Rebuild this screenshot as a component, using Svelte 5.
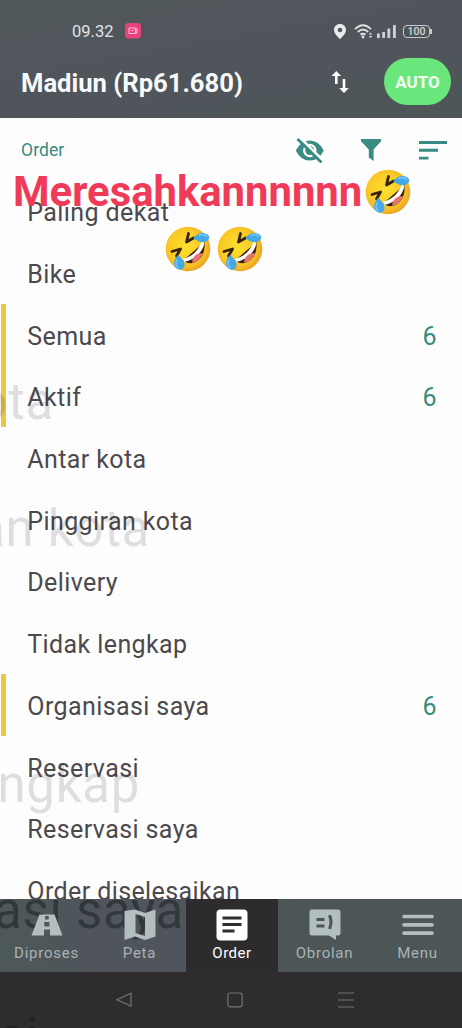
<script>
  const rows = [
    { label: 'Paling dekat' },
    { label: 'Bike' },
    { label: 'Semua', count: 6, marked: true },
    { label: 'Aktif', count: 6, marked: true },
    { label: 'Antar kota' },
    { label: 'Pinggiran kota' },
    { label: 'Delivery' },
    { label: 'Tidak lengkap' },
    { label: 'Organisasi saya', count: 6, marked: true },
    { label: 'Reservasi' },
    { label: 'Reservasi saya' },
    { label: 'Order diselesaikan' }
  ];
  const tabs = ['Diproses', 'Peta', 'Order', 'Obrolan', 'Menu'];
</script>

{#snippet laugh()}
  <svg class="emoji" viewBox="0 0 46 46">
    <defs>
      <radialGradient id="face" cx="45%" cy="45%" r="57%">
        <stop offset="0" stop-color="#fde030" />
        <stop offset=".7" stop-color="#fac825" />
        <stop offset="1" stop-color="#e9a326" />
      </radialGradient>
    </defs>
    <circle cx="23" cy="23" r="22.3" fill="url(#face)" />
    <path d="M39.500 16C40 22 39 29 34 33.500C29 38 23 38.500 18 34.500Z" fill="#38220f" />
    <path d="M36.500 15.500C34 24 27 31 17.500 33L19.500 36C29 34 37.500 27 39.500 17Z" fill="#fff" />
    <path d="M38 27.500C33 26 27.500 30 27 36.700C30 36.500 32 35.300 34 33.500C36 31.700 37.300 29.500 38 27.500Z" fill="#e5736e" />
    <path d="M7 25.500L15.500 23L11.500 30M23.500 7.500L21.500 16L28.500 12" fill="none" stroke="#38220f" stroke-width="2.800" stroke-linecap="round" stroke-linejoin="round" />
    <path d="M28.500 12.500C31 7 38 5.500 42.500 8.500C46.500 11.500 43 16 37.500 16C33 16 31 14 28.500 12.500Z" fill="#45a9e8" />
    <path d="M13 29C18 33 21.500 38 18.500 42C15.500 45.500 9.500 43 9 38C9 34 11 31 13 29Z" fill="#45a9e8" />
    <path d="M34 9.500C37 8 40 8.500 41.500 10.500M12 34C10.500 37 11 40 13 41.500" fill="none" stroke="#79c9f3" stroke-width="1.500" stroke-linecap="round" />
  </svg>
{/snippet}

<div class="screen">
  <header>
    <div class="status">
      <span class="time">09.32</span>
      <svg class="rec" viewBox="0 0 16 16"><rect width="16" height="15.500" rx="3.500" fill="#e7427b" /><path d="M4 5h6.500v5.500H4zM10.500 6L12 5.500v4.500l-1.500-.5M6 7.500h2.500" fill="none" stroke="#fac5dc" stroke-width="1" /></svg>
      <span class="gap"></span>
      <svg class="pin" viewBox="0 0 12 15"><path fill-rule="evenodd" d="M6 0C2.600 0 0 2.600 0 5.900C0 10 6 15 6 15s6-5 6-9.100C12 2.600 9.400 0 6 0Zm0 3.700a2.300 2.300 0 1 1 0 4.600a2.300 2.300 0 0 1 0-4.600Z" fill="#e7ebed" /></svg>
      <svg class="wifi" viewBox="0 0 19 15"><path d="M1 5.200Q9 -2.800 17 5.200M3.800 8Q9 3.200 14.200 8M6.500 10.800Q9 8.600 11.500 10.800" fill="none" stroke="#dde2e4" stroke-width="1.900" /><circle cx="9" cy="13" r="1.400" fill="#dde2e4" /><path d="M14.800 10.500l1.700-2 1.700 2zM14.800 12l1.700 2 1.700-2z" fill="#dde2e4" /></svg>
      <svg class="signal" viewBox="0 0 19 13"><path d="M0 8.500h2.800v4.500H0zM5.200 7H8v6H5.200zM10.400 3.500h2.800V13h-2.800zM16 0h2.800v13H16z" fill="#ccd1d4" /></svg>
      <span class="battery">100</span>
    </div>
    <div class="title">
      <h1>Madiun (Rp61.680)</h1>
      <svg class="swap" viewBox="0 0 18 24"><path d="M5.300 14V4M13 9v10" fill="none" stroke="#fff" stroke-width="2.600" /><path d="M.5 6L5.300 1l4.800 5zM8.200 18L13 23l4.800-5z" fill="#fff" /></svg>
      <button>AUTO</button>
    </div>
  </header>

  <main>
    <div class="tools">
      <span>Order</span>
      <svg class="eye" viewBox="0 0 30 25"><path d="M.8 12.500Q6 2.500 14.800 2.500T28.800 12.500Q24 22.500 14.800 22.500T.8 12.500Z" fill="#398b83" /><circle cx="14.800" cy="12.500" r="5.600" fill="#398b83" stroke="#fff" stroke-width="2.200" /><path d="M5 -.5L28.500 23" stroke="#fff" stroke-width="2.600" /><path d="M2.500 1L26.500 24.500" stroke="#398b83" stroke-width="2.800" /></svg>
      <svg class="funnel" viewBox="0 0 20 22"><path d="M0 0h20v2.200l-7.400 8.300V22L7.800 18.500v-8L0 2.200Z" fill="#398b83" /></svg>
      <svg class="sort" viewBox="0 0 28 19"><path d="M0 1.500h28M0 9.300h19M0 17.100h9.500" stroke="#398b83" stroke-width="2.900" /></svg>
    </div>
    <ul>
      {#each rows as row}
        <li class:marked={row.marked}>
          <span>{row.label}</span>
          {#if row.count}<b>{row.count}</b>{/if}
        </li>
      {/each}
    </ul>
  </main>

  <nav>
    {#each tabs as tab, i}
      <div class="tab" class:active={i === 2}>
        <svg viewBox="0 0 32 32">
          {#if i === 0}
            <path fill-rule="evenodd" d="M8.500 5.500h15L31.500 26.500H19v-6h-6v6H.5ZM14.300 7h3.400v3.500h-3.400zM13.500 13h5v4.500h-5z" />
          {:else if i === 1}
            <path fill-rule="evenodd" d="M.5 2L11 .5l10 3.500L31.500 .5V27.500L21 31 11 27.500.5 31ZM11.500 5v19l9.500 3V8Z" />
          {:else if i === 2}
            <rect x=".5" y=".5" width="31" height="31" rx="4" /><path d="M6.500 9h19M6.500 15.500h19M6.500 22h12" stroke="#2e2d30" stroke-width="3" />
          {:else if i === 3}
            <path d="M3 .5h26q2.500 0 2.500 2.500v21q0 2.500-2.500 2.500h-2V31l-7-4.500H3Q.5 26.500 .5 24V3Q.5 .5 3 .5Z" /><path d="M7.500 10.500h8M7.500 17h8M19.500 7.500h1.500q2 6 0 11h-1.500" fill="none" stroke="#4c5557" stroke-width="3.100" />
          {:else}
            <path d="M2 7.500h28M2 15.800h28M2 24.100h28" stroke="#b3bebf" stroke-width="3.700" stroke-linecap="round" />
          {/if}
        </svg>
        <span>{tab}</span>
      </div>
    {/each}
  </nav>

  <footer>
    <svg viewBox="0 0 16 16"><path d="M15 1.300V14L1 7.800Z" /></svg>
    <svg viewBox="0 0 16 16"><rect x=".8" y="1" width="14.400" height="13.800" rx="2.500" /></svg>
    <svg viewBox="0 0 16 16"><path d="M0 1h16M0 8h16M0 15h16" /></svg>
  </footer>

  <div class="ghosts">
    <span style:right="408px" style:top="372px">Antar kota</span>
    <span style:right="312px" style:top="499px">Pinggiran kota</span>
    <span style:right="322px" style:top="755px">Tidak lengkap</span>
    <span class="dark cut" style:right="278px" style:top="881px">Organisasi saya</span>
    <span class="dark" style:right="423px" style:top="1007px">Reservasi</span>
  </div>

  <div class="caption">
    <div><strong>Meresahkannnnnn</strong>{@render laugh()}</div>
    <div class="second">{@render laugh()}{@render laugh()}</div>
  </div>
</div>

<style>
  :global(body) { margin: 0; }
  .screen { position: relative; width: 462px; height: 1028px; overflow: hidden; display: flex; flex-direction: column; background: #fefdfe; font-family: Roboto, sans-serif; }
  svg { display: block; flex: none; }
  header { height: 118px; flex: none; background: linear-gradient(170deg, #50585a, #50555c 45%, #4e5658); box-sizing: border-box; padding-top: 18px; color: #fff; }
  .status { display: flex; align-items: center; height: 26px; padding: 0 30px 0 72px; }
  .time { font-size: 16.500px; color: #e2e5e7; width: 53px; }
  .rec { width: 16px; height: 16px; }
  .gap { flex: 1; }
  .pin { width: 12px; height: 15px; margin-right: 8px; }
  .wifi { width: 19px; height: 15px; margin-right: 4px; }
  .signal { width: 19px; height: 13px; margin-right: 7px; }
  .battery { position: relative; box-sizing: border-box; width: 27px; height: 13px; border: 1px solid #c6cacd; border-radius: 4px; font-size: 10.500px; line-height: 11px; font-weight: 500; text-align: center; margin-right: 2px; color: #d2d7d9; }
  .battery::after { content: ''; position: absolute; right: -3px; top: 3px; width: 2px; height: 5px; background: #c6cacd; }
  .title { display: flex; align-items: center; height: 47px; margin-top: 14px; padding: 0 11px 0 21px; }
  h1 { flex: 1; margin: 0; font-size: 25.600px; font-weight: 700; line-height: 30px; padding-top: 2px; white-space: nowrap; color: #f7fafb; }
  .swap { width: 18px; height: 24px; margin-right: 35px; }
  button { width: 67px; height: 47px; border: 0; border-radius: 24px; padding: 0; background: #6ae77c; color: #f4fff5; font: 700 17px Roboto, sans-serif; }
  main { height: 781px; flex: none; overflow: hidden; }
  .tools { height: 64px; display: flex; align-items: center; padding: 0 15px 0 21px; }
  .tools span { flex: 1; color: #398b7f; font-size: 17.500px; letter-spacing: .1px; }
  .eye { width: 30px; height: 25px; margin-right: 36px; }
  .funnel { width: 20px; height: 22px; margin-right: 38px; }
  .sort { width: 28px; height: 19px; }
  ul { list-style: none; margin: 0; padding: 0; }
  li { position: relative; height: 61.700px; box-sizing: border-box; display: flex; justify-content: space-between; align-items: center; padding: 0 25px 0 27.300px; color: #4b494c; font-size: 25px; letter-spacing: .4px; }
  li.marked::before { content: ''; position: absolute; left: 1px; top: -1.600px; width: 5px; height: 61.700px; background: #efc640; }
  li b { color: #398b7f; font-weight: 400; }
  nav { height: 73px; flex: none; display: grid; grid-template-columns: 93px 93px 92px 93px 91px; background: linear-gradient(90deg, #4d5858, #50545c 25% 40%, #4d5656 65%); }
  .tab { display: flex; flex-direction: column; align-items: center; padding-top: 10px; color: #a9b2b4; }
  .tab:last-child { padding-left: 2px; }
  .tab svg { position: relative; z-index: 1; width: 32px; height: 32px; fill: #b3bebf; }
  .tab span { position: relative; z-index: 1; font-size: 15px; line-height: 18px; margin-top: 3px; letter-spacing: .75px; }
  .tab.active { background: #2e2b2f; color: #fff; }
  .tab.active span { letter-spacing: .5px; }
  .tab.active svg { fill: #fff; }
  footer { flex: 1; background: #2e2c2f; display: flex; justify-content: center; gap: 95px; padding: 20px 0 0 8px; }
  footer svg { width: 16px; height: 16px; fill: none; stroke: #737276; stroke-width: 1.200; }
  .ghosts span { position: absolute; font-size: 51px; line-height: 60px; letter-spacing: .7px; white-space: nowrap; color: rgba(35, 25, 40, .14); filter: blur(.7px); }
  .ghosts span.dark { color: rgba(20, 28, 28, .5); }
  .ghosts span.cut { clip-path: inset(18px 0 0 0); }
  .caption { position: absolute; z-index: 2; left: 13px; top: 169px; width: 400px; }
  .caption > div { display: flex; align-items: center; height: 46px; }
  .caption strong { width: 352px; font-size: 41.800px; line-height: 46px; white-space: nowrap; color: #ef3b58; }
  .caption .second { gap: 6px; padding-left: 152px; margin-top: 11px; }
  .emoji { width: 46px; height: 46px; }
</style>
